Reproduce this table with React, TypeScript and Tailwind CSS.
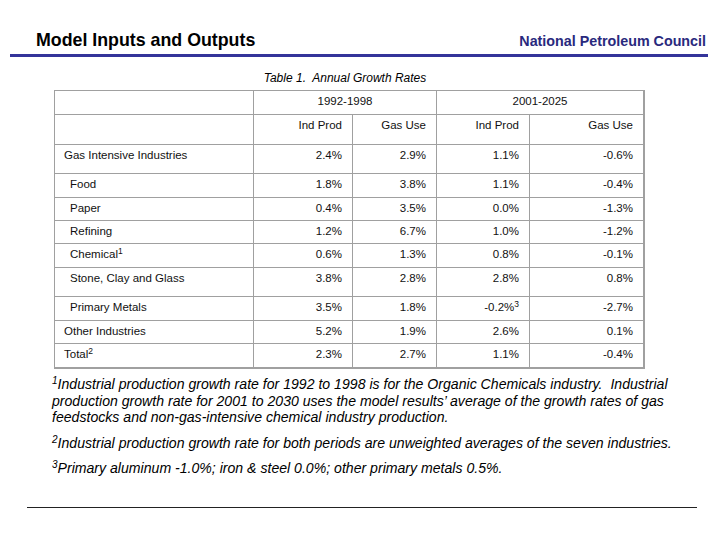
import React from 'react';

const font = { fontFamily: '"Liberation Sans", Arial, sans-serif' };

type Row = {
  label: string;
  sup?: string;
  indent?: boolean;
  h: string;
  values: string[];
};

const rows: Row[] = [
  { label: 'Gas Intensive Industries', h: 'h-[29px]', values: ['2.4%', '2.9%', '1.1%', '-0.6%'] },
  { label: 'Food', indent: true, h: 'h-[24px]', values: ['1.8%', '3.8%', '1.1%', '-0.4%'] },
  { label: 'Paper', indent: true, h: 'h-[23px]', values: ['0.4%', '3.5%', '0.0%', '-1.3%'] },
  { label: 'Refining', indent: true, h: 'h-[23px]', values: ['1.2%', '6.7%', '1.0%', '-1.2%'] },
  { label: 'Chemical', sup: '1', indent: true, h: 'h-[24px]', values: ['0.6%', '1.3%', '0.8%', '-0.1%'] },
  { label: 'Stone, Clay and Glass', indent: true, h: 'h-[29px]', values: ['3.8%', '2.8%', '2.8%', '0.8%'] },
  { label: 'Primary Metals', indent: true, h: 'h-[24px]', values: ['3.5%', '1.8%', '-0.2%', '-2.7%'] },
  { label: 'Other Industries', h: 'h-[23px]', values: ['5.2%', '1.9%', '2.6%', '0.1%'] },
  { label: 'Total', sup: '2', h: 'h-[23px]', values: ['2.3%', '2.7%', '1.1%', '-0.4%'] },
];

// widths of the four number columns (border-box, last one has no right border)
const numCols = ['w-[99px] border-r', 'w-[84px] border-r', 'w-[93px] border-r', 'w-[113px]'];

const cell = 'border-[#a0a0a0] pt-[3px] leading-[14px]';
const sup = 'text-[8.5px] align-top leading-[10px] relative top-[-1px]';
const noteSup = 'text-[10px] align-top leading-[10px]';

const App: React.FC = () => {
  return (
    <div className="w-[720px] h-[540px] bg-white text-black overflow-hidden" style={font}>
      {/* Header */}
      <div className="flex justify-between items-baseline pt-[30px] pl-[36px] pr-[14px]">
        <h1 className="text-[17.8px] font-bold leading-[20px]">Model Inputs and Outputs</h1>
        <span className="text-[14.3px] font-bold leading-[20px] text-[#29297d]">National Petroleum Council</span>
      </div>
      <div className="ml-[10px] w-[698px] h-[3px] mt-[3px] bg-[#34349a]" />

      {/* Table */}
      <div className="ml-[54px] w-[591px]">
        <p className="mt-[14px] text-[12px] leading-[14px] italic text-center pr-[9px] whitespace-pre">
          Table 1.  Annual Growth Rates
        </p>

        <div className="mt-[5px] border-l border-t border-r-2 border-b-2 border-[#a0a0a0] text-[11.5px] text-[#111]">
          <div className="flex h-[24px] border-b border-[#a0a0a0]">
            <div className={`w-[199px] border-r ${cell}`} />
            <div className={`w-[183px] border-r text-center ${cell}`}>1992-1998</div>
            <div className={`w-[206px] text-center ${cell}`}>2001-2025</div>
          </div>
          <div className="flex h-[30px] border-b border-[#a0a0a0]">
            <div className={`w-[199px] border-r ${cell}`} />
            {['Ind Prod', 'Gas Use', 'Ind Prod', 'Gas Use'].map((t, i) => (
              <div key={i} className={`${numCols[i]} text-right pr-[10px] ${cell}`}>
                {t}
              </div>
            ))}
          </div>
          {rows.map((r, ri) => (
            <div
              key={r.label}
              className={`flex ${r.h} ${ri < rows.length - 1 ? 'border-b border-[#a0a0a0]' : ''}`}
            >
              <div className={`w-[199px] border-r ${r.indent ? 'pl-[15px]' : 'pl-[9px]'} ${cell}`}>
                {r.label}
                {r.sup && <span className={sup}>{r.sup}</span>}
              </div>
              {r.values.map((v, i) => (
                <div key={i} className={`${numCols[i]} text-right pr-[10px] ${cell}`}>
                  {v}
                  {r.label === 'Primary Metals' && i === 2 && <span className={sup}>3</span>}
                </div>
              ))}
            </div>
          ))}
        </div>
      </div>

      {/* Footnotes */}
      <div className="ml-[52px] mt-[7px] text-[14.1px] leading-[16.5px] italic whitespace-nowrap">
        <p>
          <span className={noteSup}>1</span>Industrial production growth rate for 1992 to 1998 is for the Organic Chemicals industry.{'\u00a0 '}Industrial
          <br />
          production growth rate for 2001 to 2030 uses the model results’ average of the growth rates of gas
          <br />
          feedstocks and non-gas-intensive chemical industry production.
        </p>
        <p className="mt-[9.5px]">
          <span className={noteSup}>2</span>Industrial production growth rate for both periods are unweighted averages of the seven industries.
        </p>
        <p className="mt-[8.5px]">
          <span className={noteSup}>3</span>Primary aluminum -1.0%; iron &amp; steel 0.0%; other primary metals 0.5%.
        </p>
      </div>

      <div className="ml-[27px] w-[670px] h-px bg-[#222] mt-[30px]" />
    </div>
  );
};

export default App;
